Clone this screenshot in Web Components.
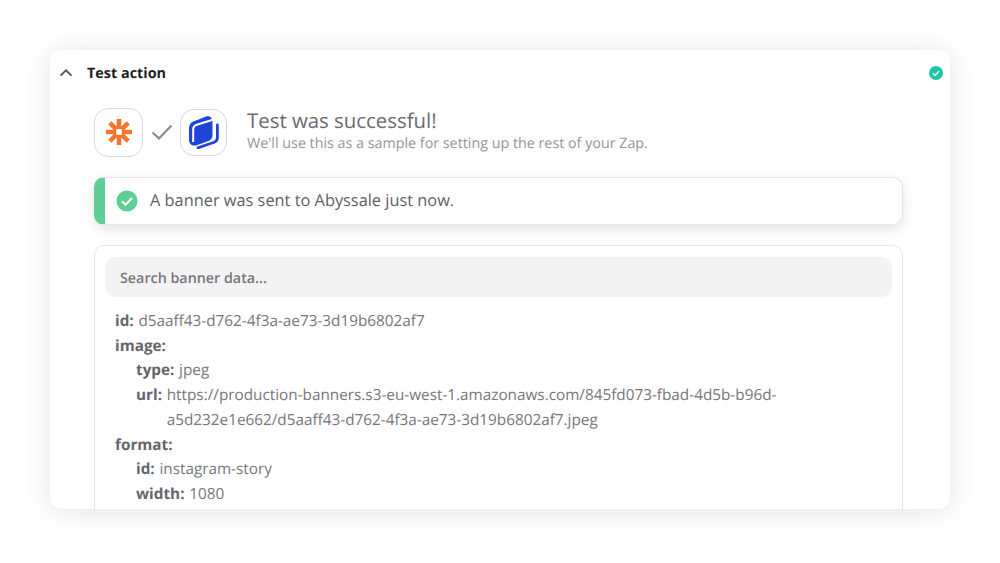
<!DOCTYPE html>
<html>
<head>
<meta charset="utf-8">
<style>
  html, body { margin: 0; height: 563px; overflow: hidden; background: #fff; }
  body { font-family: "Open Sans", sans-serif; padding: 50px 50px 0; box-sizing: border-box; text-rendering: geometricPrecision; }
</style>
</head>
<body>
<test-card title="Test action">
  <test-result heading="Test was successful!" sub="We'll use this as a sample for setting up the rest of your Zap."></test-result>
  <status-banner>A banner was sent to Abyssale just now.</status-banner>
  <data-panel placeholder="Search banner data...">
    <data-row name="id">d5aaff43-d762-4f3a-ae73-3d19b6802af7</data-row>
    <data-row name="image"></data-row>
    <data-row name="type" level="1">jpeg</data-row>
    <data-row name="url" level="1">https://production-banners.s3-eu-west-1.amazonaws.com/845fd073-fbad-4d5b-b96d-a5d232e1e662/d5aaff43-d762-4f3a-ae73-3d19b6802af7.jpeg</data-row>
    <data-row name="format"></data-row>
    <data-row name="id" level="1">instagram-story</data-row>
    <data-row name="width" level="1">1080</data-row>
  </data-panel>
</test-card>

<script>
class TestCard extends HTMLElement {
    constructor() {
        super();
        this.attachShadow({ mode: 'open' });
    }

    connectedCallback() {
        const title = this.getAttribute('title') ?? '';
        this.shadowRoot.innerHTML = `
      <style>
        :host{
          display:block;
          height:459px;
          background:#fff;
          border-radius:12px;
          box-shadow:0 2px 26px rgba(40,40,50,.13);
          overflow:hidden;
        }
        .head{
          display:flex;
          align-items:center;
          height:45px;
          padding:0 7px 0 9px;
        }
        .chev{ width:14px; height:14px; }
        .title{
          margin:0 0 0 14px;
          padding-top:1px;
          flex:1;
          font-size:14.4px;
          font-weight:700;
          color:#1f1d24;
        }
        .ok{ width:14px; height:14px; }
        .body{
          padding:12px 47px 0 44px;
          display:flex;
          flex-direction:column;
        }
      </style>
      <div class="head">
        <svg class="chev" viewBox="0 0 14 14"><path d="M1.5 9.6 7 4.4l5.5 5.2" fill="none" stroke="#55535c" stroke-width="1.9"/></svg>
        <h2 class="title">${title}</h2>
        <svg class="ok" viewBox="0 0 14 14"><circle cx="7" cy="7" r="7" fill="#20c5a0"/><path d="M3.9 7.2 6.1 9.4 10.2 5" fill="none" stroke="#e4f8f2" stroke-width="1.4"/></svg>
      </div>
      <div class="body"><slot></slot></div>
    `;
    }
}

class TestResult extends HTMLElement {
    constructor() {
        super();
        this.attachShadow({ mode: 'open' });
    }

    connectedCallback() {
        this.shadowRoot.innerHTML = `
      <style>
        :host{ display:flex; align-items:center; height:50px; }
        .tile{
          box-sizing:border-box;
          background:#fff;
          border:1px solid #d9d8dc;
          border-radius:14px;
          display:flex;
          align-items:center;
          justify-content:center;
        }
        .a{ width:49px; height:49px; }
        .b{ width:47px; height:47px; }
        .tick{ width:22px; height:18px; margin:0 7px 0 8px; }
        .txt{ margin-left:20px; margin-top:-4px; }
        .h{ font-size:20.4px; line-height:26px; color:#6b6a70; }
        .s{ font-size:14.3px; line-height:18px; color:#96959b; margin-top:2px; }
      </style>
      <div class="tile a">
        <svg width="26" height="26" viewBox="0 0 26 26">
          <g stroke="#f5752b" stroke-width="4.5">
            <path d="M13 0v26M0 13h26M3.8 3.8l18.4 18.4M22.2 3.8 3.8 22.2"/>
          </g>
          <rect x="10.2" y="10.2" width="5.6" height="5.6" fill="#fff"/>
        </svg>
      </div>
      <svg class="tick" viewBox="0 0 22 18"><path d="M1.5 9.5 8 15.5 20.5 2.5" fill="none" stroke="#8d8c91" stroke-width="2.2"/></svg>
      <div class="tile b">
        <svg width="34" height="34" viewBox="0 0 34 34">
          <path d="M2 13C2 9.5 4 7.5 7 6.2L18.5 1.8C22.5.4 25.5 2.5 25.5 6.5V20C25.5 23 24 25 21.5 26L10.5 30C5.5 31.8 2 29 2 25Z" fill="#1e44d8"/>
          <path d="M6.2 27V14.4C6.2 12 7.5 10.5 9.8 9.7L26.5 4.5" fill="none" stroke="#fff" stroke-width="2"/>
          <path d="M30.4 10V22.5C30.4 25 29.2 26.5 27.2 27.3L11 32.8" fill="none" stroke="#1e44d8" stroke-width="2.8" stroke-linecap="round"/>
        </svg>
      </div>
      <div class="txt">
        <div class="h">${this.getAttribute('heading') ?? ''}</div>
        <div class="s">${this.getAttribute('sub') ?? ''}</div>
      </div>
    `;
    }
}

class StatusBanner extends HTMLElement {
    constructor() {
        super();
        this.attachShadow({ mode: 'open' });
    }

    connectedCallback() {
        this.shadowRoot.innerHTML = `
      <style>
        :host{
          display:flex;
          align-items:center;
          box-sizing:border-box;
          height:48px;
          margin-top:20px;
          background:#fff;
          border:1px solid #e6e6e8;
          border-left:11px solid #5fce94;
          border-radius:10px;
          box-shadow:0 4px 12px rgba(40,40,50,.13);
          font-size:16.35px;
          color:#5f5e64;
        }
        svg{ width:22px; height:22px; margin:0 12px 0 11px; }
        span{ padding-bottom:3px; }
      </style>
      <svg viewBox="0 0 22 22"><circle cx="11" cy="11" r="10.5" fill="#5fce94"/><path d="M6 11.3 9.5 14.7 16 8" fill="none" stroke="#fff" stroke-width="2.2"/></svg>
      <span><slot></slot></span>
    `;
    }
}

class DataPanel extends HTMLElement {
    constructor() {
        super();
        this.attachShadow({ mode: 'open' });
    }

    connectedCallback() {
        this.shadowRoot.innerHTML = `
      <style>
        :host{
          display:block;
          box-sizing:border-box;
          height:300px;
          margin-top:20px;
          padding:11px 10px 10px;
          border:1px solid #e6e6e8;
          border-radius:10px;
        }
        .search{
          box-sizing:border-box;
          height:40px;
          padding:2px 15px 0;
          display:flex;
          align-items:center;
          background:#f3f3f4;
          border-radius:10px;
          font-size:14.3px;
          font-weight:600;
          color:#77767c;
        }
        .rows{ padding:12px 10px 0; }
      </style>
      <div class="search">${this.getAttribute('placeholder') ?? ''}</div>
      <div class="rows"><slot></slot></div>
    `;
    }
}

class DataRow extends HTMLElement {
    constructor() {
        super();
        this.attachShadow({ mode: 'open' });
    }

    connectedCallback() {
        const level = Number(this.getAttribute('level') ?? 0);
        this.shadowRoot.innerHTML = `
      <style>
        :host{
          display:flex;
          gap:4.7px;
          padding-left:${level * 21}px;
          max-width:670px;
          font-size:15.3px;
          line-height:24.7px;
          color:#77767c;
        }
        b{ font-weight:700; color:#66656b; white-space:nowrap; }
        span{ overflow-wrap:anywhere; }
      </style>
      <b>${this.getAttribute('name') ?? ''}:</b>
      <span><slot></slot></span>
    `;
    }
}

customElements.define('test-card', TestCard);
customElements.define('test-result', TestResult);
customElements.define('status-banner', StatusBanner);
customElements.define('data-panel', DataPanel);
customElements.define('data-row', DataRow);
</script>
</body>
</html>
